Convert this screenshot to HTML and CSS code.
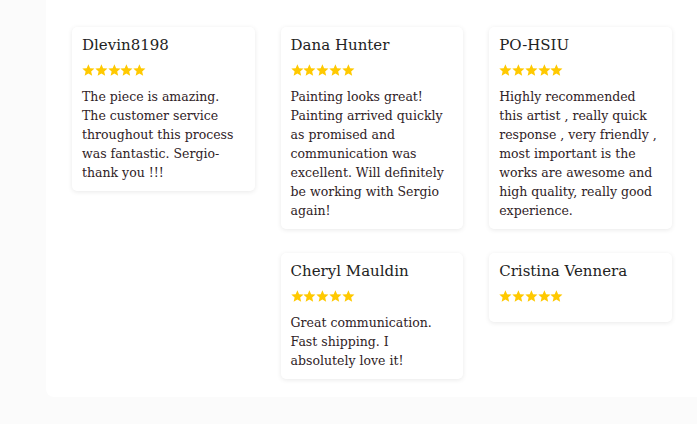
FILE: index.html
```html
<!DOCTYPE html>
<html>
<head>
<meta charset="utf-8">
<link rel="stylesheet" href="styles.css">
</head>
<body>
<svg width="0" height="0" class="defs">
  <defs>
    <symbol id="star" viewBox="1.5 1.8 21 19.6">
      <path d="M12 17.27L18.18 21l-1.64-7.03L22 9.24l-7.19-.61L12 2 9.19 8.63 2 9.24l5.46 4.73L5.82 21z" fill="#ffc900"/>
    </symbol>
  </defs>
</svg>
<main class="panel">
  <div class="col">
    <article class="card">
      <h3 class="name">Dlevin8198</h3>
      <div class="stars"><svg><use href="#star"/></svg><svg><use href="#star"/></svg><svg><use href="#star"/></svg><svg><use href="#star"/></svg><svg><use href="#star"/></svg></div>
      <p class="text">The piece is amazing. The customer service throughout this process was fantastic. Sergio- thank you !!!</p>
    </article>
  </div>
  <div class="col">
    <article class="card">
      <h3 class="name">Dana Hunter</h3>
      <div class="stars"><svg><use href="#star"/></svg><svg><use href="#star"/></svg><svg><use href="#star"/></svg><svg><use href="#star"/></svg><svg><use href="#star"/></svg></div>
      <p class="text">Painting looks great! Painting arrived quickly as promised and communication was excellent. Will definitely be working with Sergio again!</p>
    </article>
    <article class="card">
      <h3 class="name">Cheryl Mauldin</h3>
      <div class="stars"><svg><use href="#star"/></svg><svg><use href="#star"/></svg><svg><use href="#star"/></svg><svg><use href="#star"/></svg><svg><use href="#star"/></svg></div>
      <p class="text">Great communication. Fast shipping. I absolutely love it!</p>
    </article>
  </div>
  <div class="col">
    <article class="card">
      <h3 class="name">PO-HSIU</h3>
      <div class="stars"><svg><use href="#star"/></svg><svg><use href="#star"/></svg><svg><use href="#star"/></svg><svg><use href="#star"/></svg><svg><use href="#star"/></svg></div>
      <p class="text">Highly recommended this artist , really quick response , very friendly , most important is the works are awesome and high quality, really good experience.</p>
    </article>
    <article class="card">
      <h3 class="name">Cristina Vennera</h3>
      <div class="stars"><svg><use href="#star"/></svg><svg><use href="#star"/></svg><svg><use href="#star"/></svg><svg><use href="#star"/></svg><svg><use href="#star"/></svg></div>
    </article>
  </div>
</main>
</body>
</html>
```
FILE: styles.css
```css
html, body {
  margin: 0;
  background: #fbfbfb;
  font-family: "DejaVu Serif", "Liberation Serif", serif;
}
.defs { position: absolute; }
.panel {
  margin-left: 46px;
  background: #fff;
  border-bottom-left-radius: 8px;
  padding: 27px 25px 18px 26px;
  display: flex;
  gap: 26px;
  align-items: flex-start;
}
.col {
  width: 182.6px;
  display: flex;
  flex-direction: column;
  gap: 24px;
}
.card {
  background: #fff;
  border-radius: 5px;
  box-shadow: 0 1px 5px rgba(0, 0, 0, 0.09);
  padding: 7px 10px 9px;
}
.name {
  margin: 0;
  font-size: 15px;
  line-height: 22px;
  font-weight: normal;
  color: #222;
}
.stars {
  margin-top: 8px;
  display: flex;
  height: 12px;
  margin-bottom: 11px;
}
.stars svg {
  width: 12.8px;
  height: 12px;
}
.text {
  margin: 0;
  font-size: 12.5px;
  line-height: 19px;
  color: #2f2226;
}
```
